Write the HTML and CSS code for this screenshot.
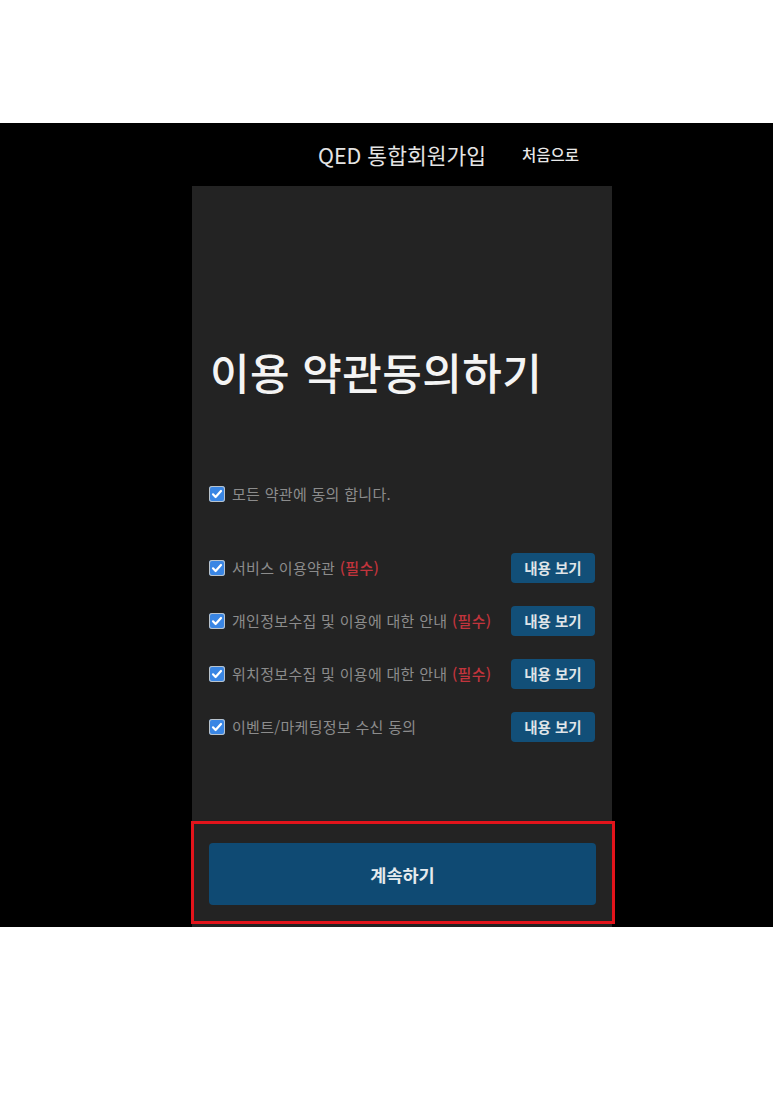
FILE: index.html
```html
<!DOCTYPE html>
<html lang="ko">
<head>
<meta charset="utf-8">
<title>QED 통합회원가입</title>
<link rel="stylesheet" href="styles.css">
</head>
<body>
<div class="band">
  <header class="topbar">
    <div></div>
    <h1 class="brand">QED 통합회원가입</h1>
    <a class="home">처음으로</a>
  </header>
  <main class="panel">
    <h2 class="title">이용 약관동의하기</h2>
    <label class="agree-all">
      <span class="box"><svg viewBox="0 0 16 16" width="16" height="16"><path d="M4 8.3l2.6 2.7L12 5" fill="none" stroke="#fff" stroke-width="2.2" stroke-linecap="round" stroke-linejoin="round"/></svg></span>
      <span class="label">모든 약관에 동의 합니다.</span>
    </label>
    <ul class="terms">
      <li class="term">
        <span class="box"><svg viewBox="0 0 16 16" width="16" height="16"><path d="M4 8.3l2.6 2.7L12 5" fill="none" stroke="#fff" stroke-width="2.2" stroke-linecap="round" stroke-linejoin="round"/></svg></span>
        <span class="label">서비스 이용약관 <em class="req">(필수)</em></span>
        <button class="view">내용 보기</button>
      </li>
      <li class="term">
        <span class="box"><svg viewBox="0 0 16 16" width="16" height="16"><path d="M4 8.3l2.6 2.7L12 5" fill="none" stroke="#fff" stroke-width="2.2" stroke-linecap="round" stroke-linejoin="round"/></svg></span>
        <span class="label">개인정보수집 및 이용에 대한 안내 <em class="req">(필수)</em></span>
        <button class="view">내용 보기</button>
      </li>
      <li class="term">
        <span class="box"><svg viewBox="0 0 16 16" width="16" height="16"><path d="M4 8.3l2.6 2.7L12 5" fill="none" stroke="#fff" stroke-width="2.2" stroke-linecap="round" stroke-linejoin="round"/></svg></span>
        <span class="label">위치정보수집 및 이용에 대한 안내 <em class="req">(필수)</em></span>
        <button class="view">내용 보기</button>
      </li>
      <li class="term">
        <span class="box"><svg viewBox="0 0 16 16" width="16" height="16"><path d="M4 8.3l2.6 2.7L12 5" fill="none" stroke="#fff" stroke-width="2.2" stroke-linecap="round" stroke-linejoin="round"/></svg></span>
        <span class="label">이벤트/마케팅정보 수신 동의</span>
        <button class="view">내용 보기</button>
      </li>
    </ul>
    <footer class="actions">
      <button class="continue">계속하기</button>
    </footer>
  </main>
</div>
</body>
</html>
```

FILE: styles.css
```css
* { box-sizing: border-box; }
html, body {
  margin: 0;
  padding: 0;
  background: #fff;
}
body {
  font-family: "Noto Sans CJK KR", "Noto Sans", sans-serif;
  padding-top: 123px;
}
.band {
  background: #000;
  height: 804px;
  display: flex;
  flex-direction: column;
  align-items: center;
  padding-left: 31px;
}
.topbar {
  width: 420px;
  height: 64px;
  display: grid;
  grid-template-columns: 1fr auto 1fr;
  align-items: center;
}
.brand {
  margin: 0;
  font-size: 21.5px;
  font-weight: 400;
  color: #e4e4e4;
  line-height: 1;
  padding-top: 1px;
}
.home {
  justify-self: end;
  margin-right: 33px;
  font-size: 15.5px;
  color: #e8e8e8;
  font-weight: 500;
  line-height: 1;
}
.panel {
  width: 420px;
  flex: 1;
  background: #232323;
  padding: 0 17px;
  display: flex;
  flex-direction: column;
}
.title {
  margin: 160px 0 0 1px;
  font-size: 43px;
  line-height: 50px;
  letter-spacing: 0.4px;
  font-weight: 500;
  color: #f4f4f4;
}
.agree-all {
  margin-top: 88px;
  display: flex;
  align-items: center;
  height: 20px;
}
.box {
  width: 16px;
  height: 16px;
  flex: none;
  border-radius: 3px;
  background: #3a86e4;
  box-shadow: 0 0 0 1px #b9c3cc inset;
  display: flex;
  align-items: center;
  justify-content: center;
}
.box svg { display: block; }
.label {
  margin-left: 7px;
  font-size: 15px;
  letter-spacing: 0.3px;
  color: #8c8c8c;
  line-height: 20px;
}
.req {
  font-style: normal;
  color: #c1343c;
  font-weight: 500;
}
.terms {
  list-style: none;
  margin: 48px 0 0;
  padding: 0;
  display: flex;
  flex-direction: column;
  gap: 22px;
}
.term {
  display: flex;
  align-items: center;
  height: 31px;
}
.term .label { flex: 1; }
.view {
  width: 84px;
  height: 30px;
  border: 0;
  border-radius: 4px;
  background: #124f78;
  color: #dfe4e8;
  font-family: inherit;
  font-size: 14.5px;
  font-weight: 700;
  padding: 0;
}
.actions {
  margin: 79px -20px 3px -18px;
  border: 3px solid #e3141b;
  padding: 19px 16px 16px 15px;
}
.continue {
  display: block;
  width: 100%;
  height: 62px;
  border: 0;
  border-radius: 4px;
  background: #0f4a73;
  color: #e6eaee;
  font-family: inherit;
  font-size: 17.5px;
  font-weight: 700;
  padding: 0;
}
```
